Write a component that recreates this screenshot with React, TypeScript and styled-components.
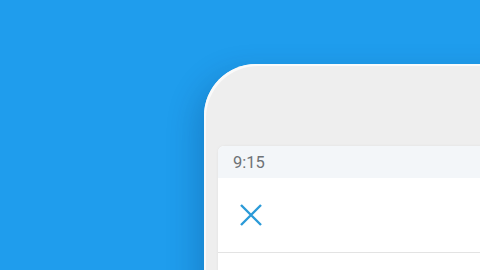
import React from "react";
import styled, { createGlobalStyle } from "styled-components";

const Global = createGlobalStyle`
  html, body { margin: 0; padding: 0; width: 480px; height: 270px; overflow: hidden; }
  body { background: #1f9ded; font-family: Roboto, "Noto Sans", sans-serif; }
`;

const Stage = styled.div`
  width: 480px;
  height: 270px;
  overflow: hidden;
  padding: 64px 0 0 204px;
  box-sizing: border-box;
`;

const Phone = styled.div`
  width: 320px;
  height: 260px;
  background: #eeeeee;
  border-top-left-radius: 52px;
  box-shadow: inset 2px 2px 0 #fafafa, -8px 10px 30px rgba(0, 40, 90, 0.22);
  padding: 82px 0 0 14px;
  box-sizing: border-box;
`;

const Screen = styled.div`
  background: #ffffff;
  border-top-left-radius: 6px;
  height: 200px;
  overflow: hidden;
  box-shadow: 0 0 3px rgba(0, 0, 0, 0.06);
`;

const StatusBar = styled.div`
  height: 32px;
  background: #f3f6f9;
  display: flex;
  align-items: center;
  padding-left: 15px;
  font-size: 16.5px;
  color: #6e7276;
`;

const Header = styled.div`
  height: 74px;
  display: flex;
  align-items: center;
  padding-left: 21px;
  border-bottom: 1px solid #e3e3e3;
`;

const CloseIcon = () => (
  <svg width="24" height="24" viewBox="0 0 24 24">
    <path d="M2 2 L22 22 M22 2 L2 22" stroke="#2b9ad8" strokeWidth="2.4" strokeLinecap="butt" fill="none" />
  </svg>
);

export default function App() {
  return (
    <>
      <Global />
      <Stage>
        <Phone>
          <Screen>
            <StatusBar>9:15</StatusBar>
            <Header>
              <CloseIcon />
            </Header>
          </Screen>
        </Phone>
      </Stage>
    </>
  );
}
